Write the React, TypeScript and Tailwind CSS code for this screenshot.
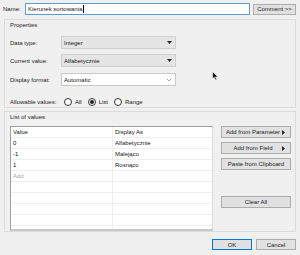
import React from 'react';

const Combo = ({ value, white }: { value: string; white?: boolean }) => (
  <div
    className={`w-[115px] h-[13px] flex items-center justify-between pl-[2px] pr-[3px] border ${
      white ? 'bg-white border-[#c9c9c9]' : 'bg-[#e5e5e5] border-[#d0d0d0]'
    }`}
  >
    <span>{value}</span>
    {white ? (
      <svg width="6" height="4" viewBox="0 0 6 4">
        <path d="M0.5 0.5 L3 3 L5.5 0.5" fill="none" stroke="#9a9a9a" strokeWidth="0.8" />
      </svg>
    ) : (
      <svg width="5" height="3" viewBox="0 0 5 3">
        <path d="M0 0 H5 L2.5 3 Z" fill="#222" />
      </svg>
    )}
  </div>
);

const Radio = ({ label, checked }: { label: string; checked?: boolean }) => (
  <div className="flex items-center gap-[3px]">
    <span className="w-[8px] h-[8px] rounded-full border border-[#333] bg-white flex items-center justify-center">
      {checked && <span className="w-[4px] h-[4px] rounded-full bg-[#222]" />}
    </span>
    <span>{label}</span>
  </div>
);

const SideButton = ({ label, arrow }: { label: string; arrow?: boolean }) => (
  <div className="w-[70px] h-[12px] bg-[#e1e1e1] border border-[#adadad] flex items-center justify-center relative">
    <span className={arrow ? 'pr-[6px]' : ''}>{label}</span>
    {arrow && (
      <svg className="absolute right-[5px]" width="3" height="5" viewBox="0 0 3 5">
        <path d="M0 0 L3 2.5 L0 5 Z" fill="#222" />
      </svg>
    )}
  </div>
);

const App = () => {
  const rows = [
    ['Value', 'Display As'],
    ['0', 'Alfabetycznie'],
    ['-1', 'Malejąco'],
    ['1', 'Rosnąco'],
  ];

  return (
    <div className="w-[300px] h-[255px] bg-[#f0f0f0] text-[#1a1a1a] text-[6px] leading-none whitespace-nowrap font-['Liberation_Sans',Arial,sans-serif] relative overflow-hidden">
      {/* name row */}
      <div className="flex items-center pt-[3px] pl-[3px]">
        <span className="w-[22px]">Name:</span>
        <div className="w-[225px] h-[12px] bg-white border border-[#5b9bd9] flex items-center pl-[2px]">
          Kierunek sortowania
          <span className="w-px h-[8px] bg-black ml-px" />
        </div>
        <div className="ml-[3px] w-[43px] h-[11px] bg-[#e1e1e1] border border-[#adadad] flex items-center justify-center">
          Comment &gt;&gt;
        </div>
      </div>

      {/* properties */}
      <div className="ml-[4px] mt-[4px] w-[292px] h-[89px] border border-[#dcdcdc] pl-[5px]">
        <div className="mt-[2px]">Properties</div>
        <div className="flex items-center mt-[8px]">
          <span className="w-[51px]">Data type:</span>
          <Combo value="Integer" />
        </div>
        <div className="flex items-center mt-[5px]">
          <span className="w-[51px]">Current value:</span>
          <Combo value="Alfabetycznie" />
        </div>
        <div className="flex items-center mt-[6px]">
          <span className="w-[51px]">Display format:</span>
          <Combo value="Automatic" white />
        </div>
        <div className="flex items-center mt-[12px] gap-[6px]">
          <span className="w-[48px]">Allowable values:</span>
          <Radio label="All" />
          <Radio label="List" checked />
          <Radio label="Range" />
        </div>
      </div>

      {/* list of values */}
      <div className="ml-[4px] mt-[3px] w-[292px] h-[121px] border border-[#dcdcdc] pl-[5px]">
        <div className="mt-[2px]">List of values</div>
        <div className="flex mt-[6px]">
          <div className="w-[203px] h-[105px] bg-white border-l border-t border-[#a0a0a0] border-b-2 border-b-[#c8c8c8] border-r border-r-[#d8d8d8] overflow-hidden">
            {rows.map((r, i) => (
              <div key={i} className="flex h-[11px] border-b border-[#efefef]">
                <span className="w-[102px] pl-[2px] flex items-center border-r border-[#efefef]">{r[0]}</span>
                <span className="pl-[2px] flex items-center">{r[1]}</span>
              </div>
            ))}
            <div className="flex h-[11px] border-b border-[#efefef]">
              <span className="w-[102px] pl-[2px] flex items-center border-r border-[#efefef] text-[#a8a8a8]">Add</span>
            </div>
            {[0, 1, 2, 3, 4].map((i) => (
              <div key={i} className="flex h-[11px] border-b border-[#efefef]">
                <span className="w-[102px] border-r border-[#efefef]" />
              </div>
            ))}
          </div>
          <div className="ml-[8px] flex flex-col">
            <SideButton label="Add from Parameter" arrow />
            <div className="mt-[4px]">
              <SideButton label="Add from Field" arrow />
            </div>
            <div className="mt-[4px]">
              <SideButton label="Paste from Clipboard" />
            </div>
            <div className="mt-[26px]">
              <SideButton label="Clear All" />
            </div>
          </div>
        </div>
      </div>

      {/* footer */}
      <div className="flex justify-end gap-[4px] pr-[4px] mt-[7px]">
        <div className="w-[40px] h-[11px] bg-[#e1e1e1] border border-[#0078d7] flex items-center justify-center">OK</div>
        <div className="w-[40px] h-[11px] bg-[#e1e1e1] border border-[#adadad] flex items-center justify-center">Cancel</div>
      </div>

      {/* mouse pointer */}
      <svg className="absolute left-[212px] top-[71px]" width="7" height="10" viewBox="0 0 7 10">
        <path d="M0.5 0.5 V8 L2.3 6.3 L3.6 9.3 L4.8 8.8 L3.5 5.9 L6 5.9 Z" fill="#111" stroke="#fff" strokeWidth="0.6" />
      </svg>
    </div>
  );
};

export default App;
